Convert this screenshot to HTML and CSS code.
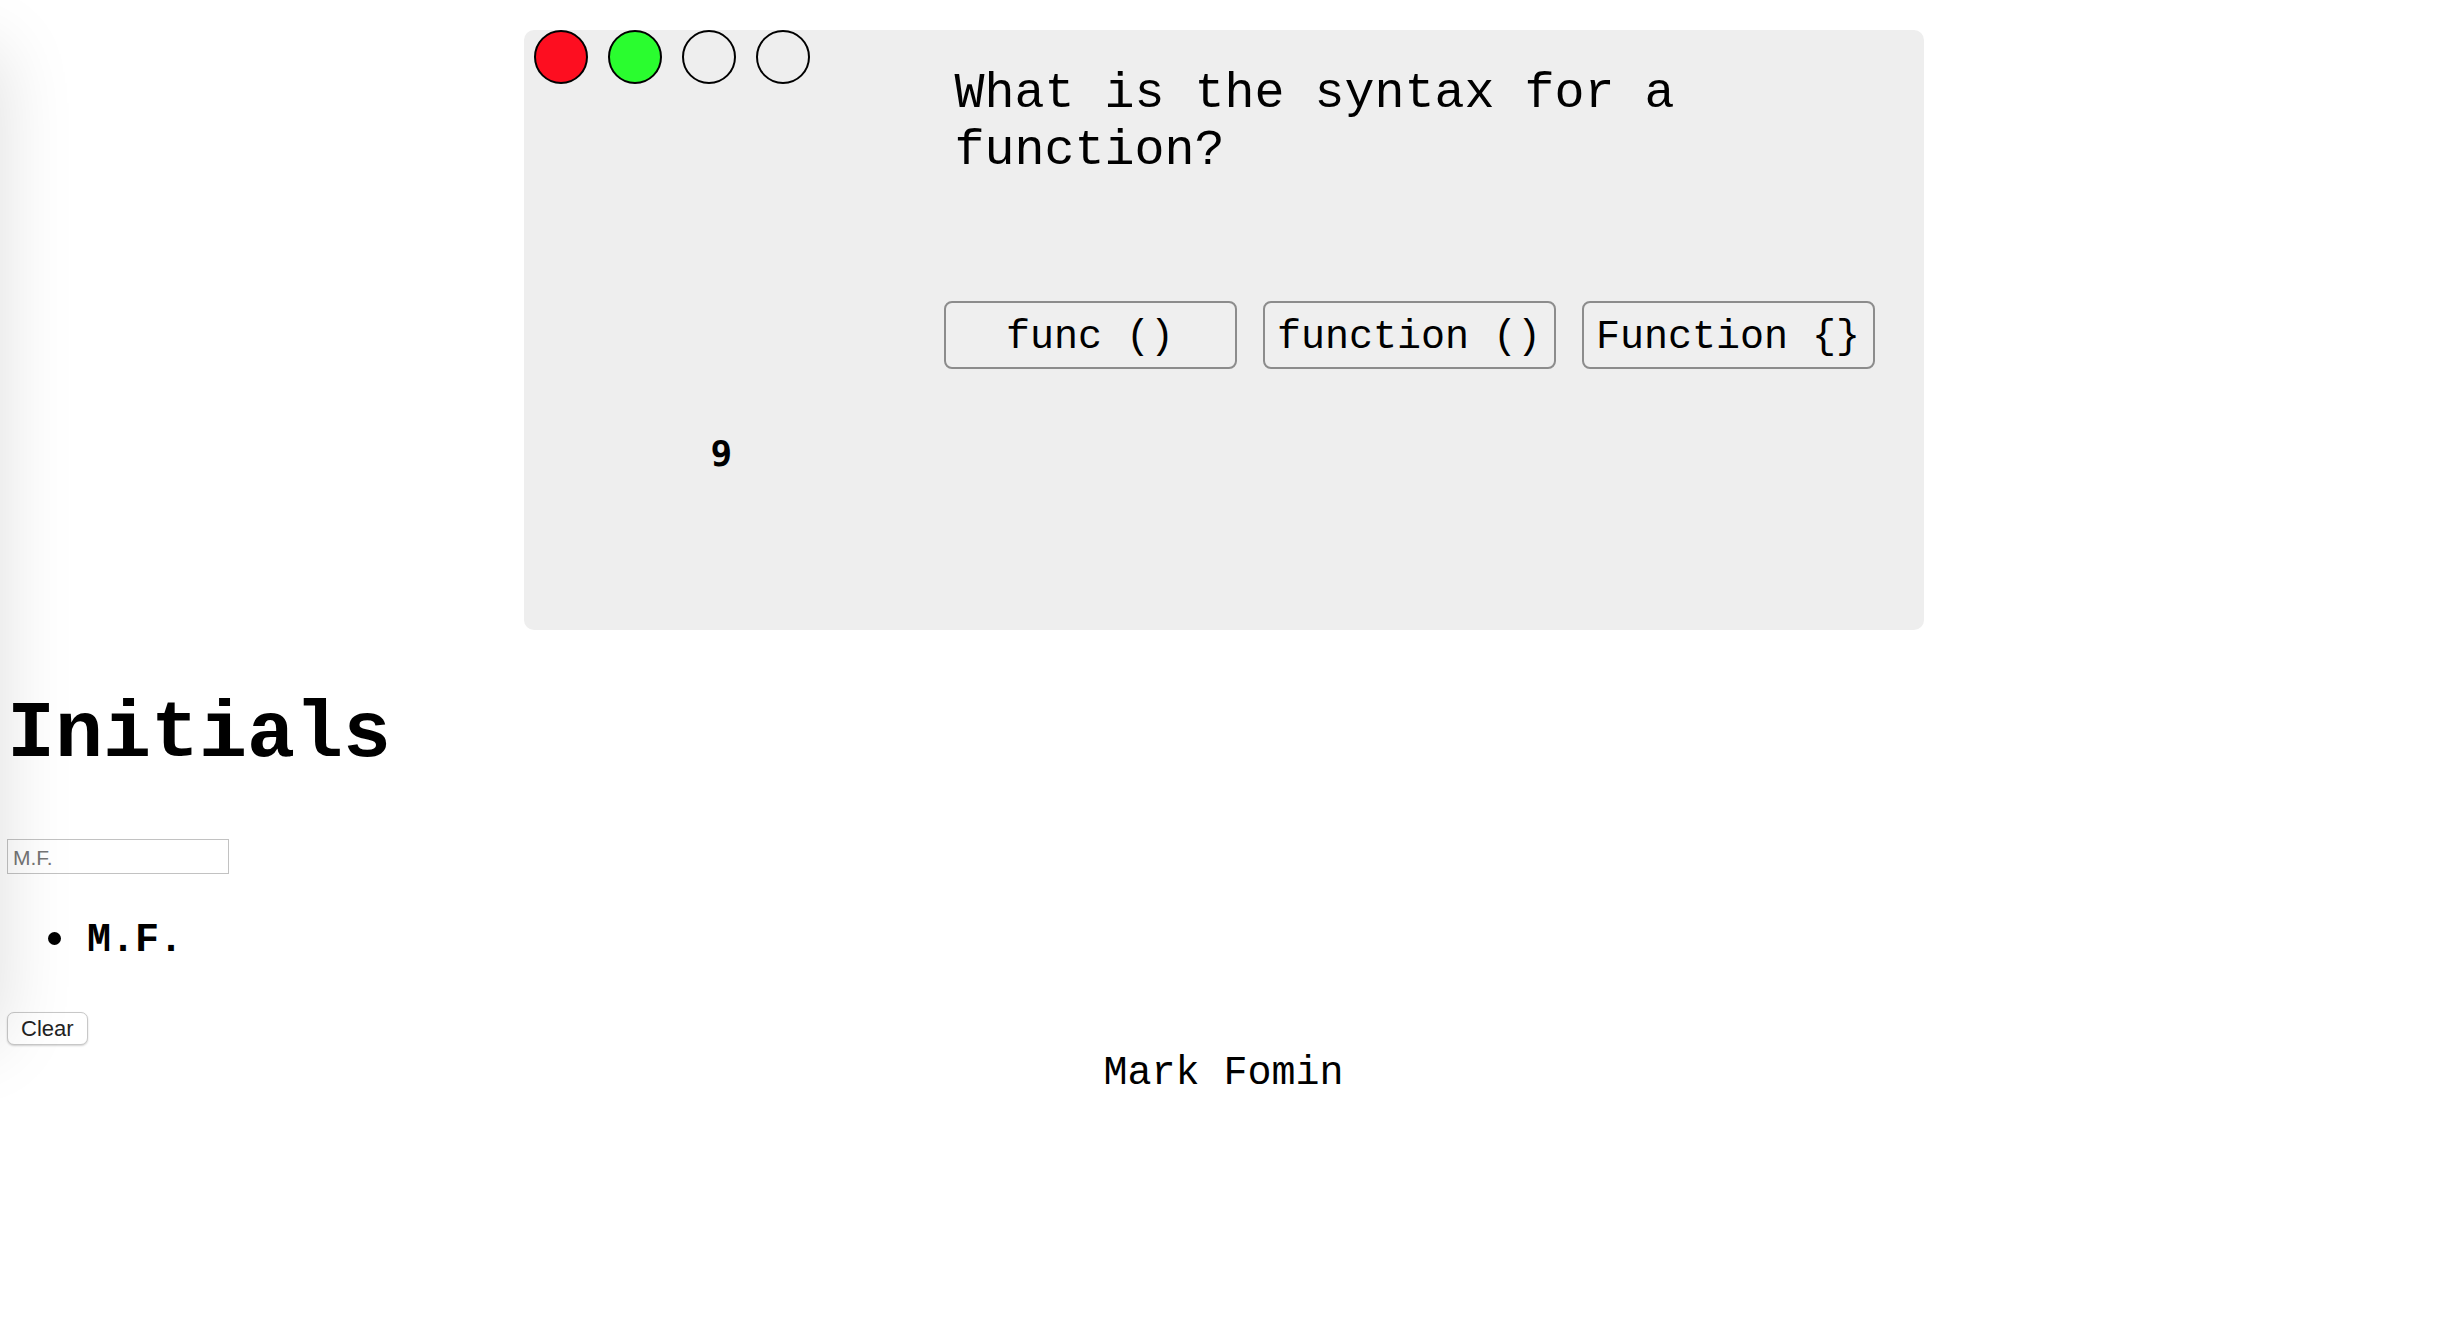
FILE: index.html
```html
<!DOCTYPE html>
<html lang="en">
<head>
<meta charset="utf-8">
<title>Quiz</title>
<link rel="stylesheet" href="styles.css">
</head>
<body>
<div class="edge-shadow"></div>
<main class="quiz">
  <section class="card">
    <div class="card-left">
      <div class="lights">
        <span class="light light-wrong"></span>
        <span class="light light-right"></span>
        <span class="light"></span>
        <span class="light"></span>
      </div>
      <div class="timer">9</div>
    </div>
    <div class="card-right">
      <h2 class="question">What is the syntax for a function?</h2>
      <div class="answers">
        <button class="answer">func ()</button>
        <button class="answer">function ()</button>
        <button class="answer">Function {}</button>
      </div>
    </div>
  </section>
</main>
<section class="initials">
  <h1 class="initials-title">Initials</h1>
  <input class="initials-input" type="text" placeholder="M.F.">
  <ul class="initials-list">
    <li class="initials-item">M.F.</li>
  </ul>
  <button class="clear-btn">Clear</button>
</section>
<footer class="footer">Mark Fomin</footer>
</body>
</html>
```

FILE: styles.css
```css
html, body {
  background: #ffffff;
}
body {
  margin: 0;
  padding: 30px 16px 40px 7px;
  font-family: "Liberation Mono", "Courier New", monospace;
  color: #000;
  position: relative;
  min-height: 1200px;
  box-sizing: border-box;
  overflow: hidden;
}
.edge-shadow {
  position: absolute;
  left: -200px;
  top: 50px;
  width: 200px;
  height: 990px;
  box-shadow: 0 0 76px rgba(0, 0, 0, 0.135);
  pointer-events: none;
}
.quiz {
  display: flex;
  justify-content: center;
}
.card {
  width: 1400px;
  height: 600px;
  background: #eeeeee;
  border-radius: 10px;
  display: grid;
  grid-template-columns: 420px 1fr;
}
.card-left {
  display: flex;
  flex-direction: column;
}
.lights {
  display: flex;
  gap: 20px;
  padding-left: 10px;
}
.light {
  width: 54px;
  height: 54px;
  box-sizing: border-box;
  border: 2px solid #000;
  border-radius: 50%;
  background: transparent;
}
.light-wrong {
  background: #fd0e20;
}
.light-right {
  background: #2afd2f;
}
.timer {
  margin-top: 350px;
  padding-left: 187px;
  font-family: "DejaVu Sans Mono", monospace;
  font-size: 36px;
  line-height: 40px;
  font-weight: bold;
}
.card-right {
  display: flex;
  flex-direction: column;
}
.question {
  margin: 35px 0 0 11px;
  font-size: 50px;
  line-height: 57px;
  font-weight: normal;
}
.answers {
  margin-top: 122px;
  display: flex;
  gap: 26px;
}
.answer {
  width: 293px;
  height: 68px;
  padding: 5px 0 0;
  box-sizing: border-box;
  border: 2px solid #8c8c8c;
  border-radius: 8px;
  background: #efefef;
  color: #000;
  font-family: "Liberation Mono", "Courier New", monospace;
  font-size: 40px;
  line-height: 48px;
}
.initials {
  display: flex;
  flex-direction: column;
  align-items: flex-start;
}
.initials-title {
  margin: 57px 0 0;
  font-size: 80px;
  line-height: 96px;
  font-weight: bold;
}
.initials-input {
  margin: 56px 0 0;
  width: 222px;
  height: 35px;
  box-sizing: border-box;
  border: 1px solid #c2c2c2;
  padding: 2px 5px 0;
  font-family: "Liberation Sans", Arial, sans-serif;
  font-size: 21px;
  background: #fff;
}
.initials-input::placeholder {
  color: #757575;
}
.initials-list {
  margin: 43px 0 0;
  padding-left: 80px;
  list-style: none;
  font-size: 40px;
  line-height: 48px;
  font-weight: bold;
}
.initials-item::before {
  content: "";
  display: inline-block;
  width: 13px;
  height: 13px;
  border-radius: 50%;
  background: #000;
  margin-left: -39px;
  margin-right: 26px;
  vertical-align: 6px;
}
.clear-btn {
  margin-top: 47px;
  height: 33px;
  padding: 0 13px;
  box-sizing: border-box;
  border: 1px solid #c8c8c8;
  border-radius: 7px;
  background: #ffffff;
  color: #222;
  font-family: "Liberation Sans", Arial, sans-serif;
  font-size: 22px;
  line-height: 31px;
  box-shadow: 0 1px 2px rgba(0, 0, 0, 0.18);
}
.footer {
  margin-top: 5px;
  text-align: center;
  font-size: 40px;
  line-height: 48px;
}
```
